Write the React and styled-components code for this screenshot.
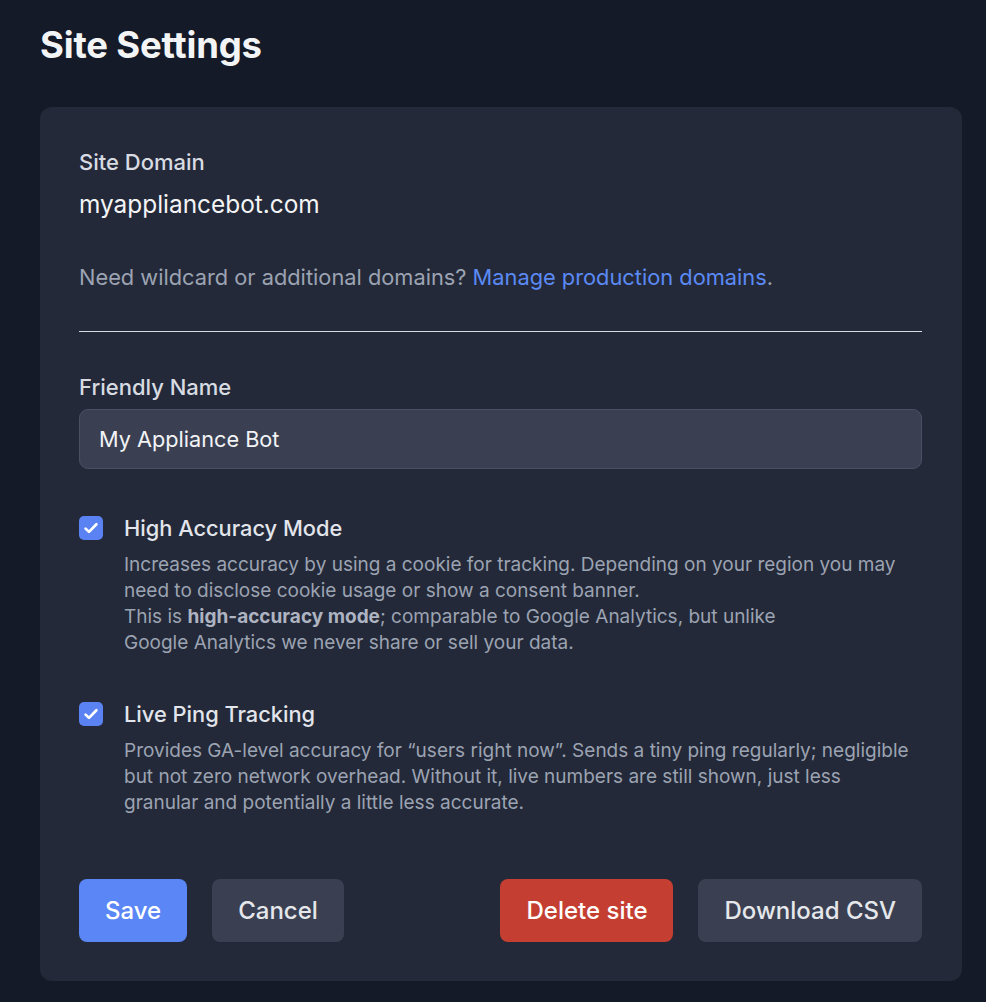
import React from "react";
import styled, { createGlobalStyle } from "styled-components";

const Global = createGlobalStyle`
  html, body { margin: 0; padding: 0; background: #141a27; }
  body { font-family: Inter, "Noto Sans", sans-serif; -webkit-font-smoothing: antialiased; }
  * { box-sizing: border-box; }
`;

const Page = styled.div`
  padding: 25px 24px 22px 40px;
  min-height: 1002px;
  background: #141a27;
`;

const Title = styled.h1`
  margin: 0 0 42px;
  font-size: 36.5px;
  line-height: 40px;
  font-weight: 700;
  color: #f3f4f6;
  letter-spacing: -0.2px;
`;

const Card = styled.section`
  background: #232938;
  border-radius: 12px;
  padding: 41px 40px 39px 39px;
  display: flex;
  flex-direction: column;
`;

const Label = styled.div`
  font-size: 22px;
  line-height: 28px;
  font-weight: 500;
  color: #d8dbe2;
  margin-top: ${(p) => p.$mt || 0}px;
`;

const Domain = styled.div`
  margin-top: 13px;
  font-size: 24.4px;
  line-height: 30px;
  color: #f3f4f6;
`;

const Help = styled.p`
  margin: 44px 0 0;
  font-size: 21.8px;
  line-height: 28px;
  color: #9ca3b2;
`;

const Link = styled.a`
  color: #5b8af5;
  text-decoration: none;
`;

const Divider = styled.hr`
  margin: 40px 0 0;
  border: 0;
  border-top: 1px solid #d9dce3;
  height: 0;
`;

const Input = styled.input`
  margin-top: 8px;
  height: 60px;
  width: 100%;
  background: #3a4052;
  border: 1px solid #4a5064;
  border-radius: 9px;
  padding: 0 19px;
  font-family: inherit;
  font-size: 21.7px;
  color: #f3f4f6;
  outline: none;
`;

const Option = styled.div`
  margin-top: ${(p) => p.$mt}px;
  display: grid;
  grid-template-columns: 24px 1fr;
  column-gap: 21px;
`;

const Box = styled.span`
  width: 24px;
  height: 24px;
  margin-top: 2px;
  border-radius: 5px;
  background: #5a82f2;
  display: flex;
  align-items: center;
  justify-content: center;
`;

const OptTitle = styled.div`
  font-size: 21.8px;
  line-height: 28px;
  font-weight: 500;
  color: #e2e5eb;
`;

const OptDesc = styled.p`
  margin: 10px 0 0;
  font-size: 19px;
  line-height: 26px;
  color: #9ca3b2;
  b { font-weight: 700; color: #aeb4c1; }
`;

const Actions = styled.div`
  margin-top: 63px;
  display: flex;
  justify-content: space-between;
`;

const Group = styled.div`
  display: flex;
  gap: 25px;
`;

const Button = styled.button`
  height: 63px;
  padding: 0 26px;
  border: 0;
  border-radius: 8px;
  font-family: inherit;
  font-size: 24px;
  font-weight: 500;
  cursor: pointer;
  color: ${(p) => (p.$variant === "secondary" ? "#e5e7eb" : "#ffffff")};
  background: ${(p) =>
    p.$variant === "primary" ? "#5b86f6" : p.$variant === "danger" ? "#c43f31" : "#3a4052"};
`;

const Check = () => (
  <svg width="18" height="18" viewBox="0 0 18 18" fill="none">
    <path d="M3.6 9.6l3.4 3.3 7.4-7.6" stroke="#fff" strokeWidth="2.7" strokeLinecap="round" strokeLinejoin="round" />
  </svg>
);

export default function App() {
  return (
    <>
      <Global />
      <Page>
        <Title>Site Settings</Title>
        <Card>
          <Label>Site Domain</Label>
          <Domain>myappliancebot.com</Domain>
          <Help>
            Need wildcard or additional domains? <Link href="#">Manage production domains</Link>.
          </Help>
          <Divider />
          <Label $mt={41}>Friendly Name</Label>
          <Input defaultValue="My Appliance Bot" />
          <Option $mt={45}>
            <Box><Check /></Box>
            <div>
              <OptTitle>High Accuracy Mode</OptTitle>
              <OptDesc>
                Increases accuracy by using a cookie for tracking. Depending on your region you may
                <br />
                need to disclose cookie usage or show a consent banner.
                <br />
                This is <b>high-accuracy mode</b>; comparable to Google Analytics, but unlike
                <br />
                Google Analytics we never share or sell your data.
              </OptDesc>
            </div>
          </Option>
          <Option $mt={44}>
            <Box><Check /></Box>
            <div>
              <OptTitle>Live Ping Tracking</OptTitle>
              <OptDesc>
                Provides GA-level accuracy for “users right now”. Sends a tiny ping regularly; negligible
                <br />
                but not zero network overhead. Without it, live numbers are still shown, just less
                <br />
                granular and potentially a little less accurate.
              </OptDesc>
            </div>
          </Option>
          <Actions>
            <Group>
              <Button $variant="primary">Save</Button>
              <Button $variant="secondary">Cancel</Button>
            </Group>
            <Group>
              <Button $variant="danger">Delete site</Button>
              <Button $variant="secondary">Download CSV</Button>
            </Group>
          </Actions>
        </Card>
      </Page>
    </>
  );
}
